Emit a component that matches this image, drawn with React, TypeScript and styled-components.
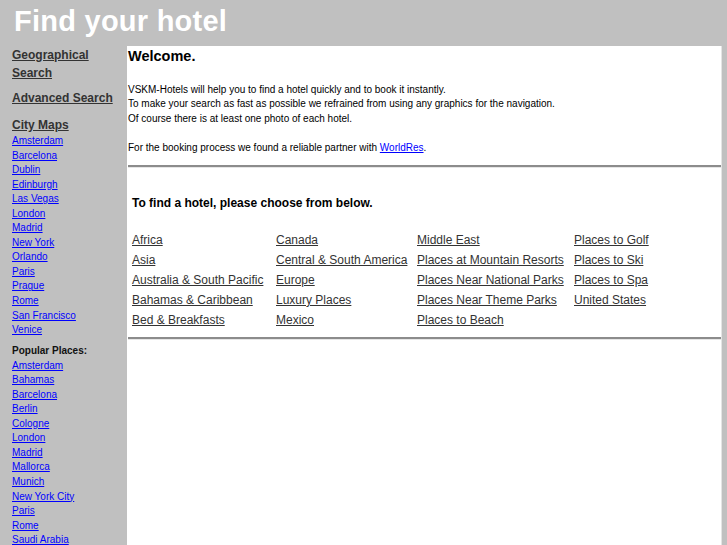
import React from "react";
import styled, { createGlobalStyle } from "styled-components";

const Global = createGlobalStyle`
  html, body { margin: 0; padding: 0; background: #c0c0c0; }
  body { font-family: "Liberation Sans", Arial, sans-serif; }
`;

const Page = styled.div`
  min-height: 545px;
  background: #c0c0c0;
`;

const Header = styled.header`
  height: 46px;
  box-sizing: border-box;
  padding: 7px 0 0 14px;
`;

const Title = styled.h1`
  margin: 0;
  font-size: 29px;
  line-height: 29px;
  font-weight: bold;
  letter-spacing: 0.25px;
  color: #ffffff;
`;

const Body = styled.div`
  display: flex;
  align-items: stretch;
  padding-right: 5px;
`;

const Sidebar = styled.nav`
  width: 127px;
  flex: none;
  box-sizing: border-box;
  padding: 0 12px;
`;

const NavHeading = styled.a<{ $gap?: number }>`
  display: block;
  font-size: 12px;
  line-height: 18px;
  font-weight: bold;
  color: #333333;
  text-decoration: underline;
  margin-bottom: ${(p) => p.$gap ?? 0}px;
`;

const LinkList = styled.ul`
  list-style: none;
  margin: 0;
  padding: 0;
`;

const SideLink = styled.a`
  display: block;
  font-size: 10px;
  line-height: 14.54px;
  color: #0000ff;
  text-decoration: underline;
`;

const SubHeading = styled.div`
  font-size: 10px;
  line-height: 14.5px;
  font-weight: bold;
  color: #111;
  margin-top: 6.5px;
`;

const Main = styled.main`
  flex: 1;
  background: #ffffff;
  border-right: 1px solid #e4e4e4;
  padding: 0 0 0 1px;
  min-height: 499px;
`;

const Welcome = styled.h2`
  margin: 0;
  font-size: 14.5px;
  line-height: 20px;
  font-weight: bold;
  color: #000;
`;

const Intro = styled.div`
  margin-top: 16.75px;
  font-size: 10px;
  line-height: 14.5px;
  color: #000;
`;

const Para = styled.p<{ $last?: boolean }>`
  margin: 0 0 ${(p) => (p.$last ? 9.5 : 14.5)}px 0;
`;

const TextLink = styled.a`
  color: #0000ff;
  text-decoration: underline;
`;

const Rule = styled.hr`
  margin: 0;
  border: none;
  border-top: 2px solid #8c8c8c;
  border-bottom: 1px solid #e6e6e6;
  height: 0;
`;

const Choose = styled.section`
  padding: 28px 0 7px 4px;
`;

const ChooseTitle = styled.div`
  font-size: 12px;
  line-height: 14px;
  font-weight: bold;
  color: #000;
  margin-bottom: 20px;
`;

const RegionGrid = styled.div`
  display: grid;
  grid-template-columns: 144px 141px 157px auto;
  grid-auto-rows: 20px;
`;

const RegionLink = styled.a`
  font-size: 12px;
  line-height: 20px;
  color: #333333;
  text-decoration: underline;
  white-space: nowrap;
`;

const cities = [
  "Amsterdam", "Barcelona", "Dublin", "Edinburgh", "Las Vegas", "London", "Madrid",
  "New York", "Orlando", "Paris", "Prague", "Rome", "San Francisco", "Venice",
];

const popular = [
  "Amsterdam", "Bahamas", "Barcelona", "Berlin", "Cologne", "London", "Madrid",
  "Mallorca", "Munich", "New York City", "Paris", "Rome", "Saudi Arabia",
];

const columns = [
  ["Africa", "Asia", "Australia & South Pacific", "Bahamas & Caribbean", "Bed & Breakfasts"],
  ["Canada", "Central & South America", "Europe", "Luxury Places", "Mexico"],
  ["Middle East", "Places at Mountain Resorts", "Places Near National Parks", "Places Near Theme Parks", "Places to Beach"],
  ["Places to Golf", "Places to Ski", "Places to Spa", "United States"],
];

export default function App() {
  const rows: string[] = [];
  for (let r = 0; r < 5; r++) {
    for (let c = 0; c < 4; c++) rows.push(columns[c][r] ?? "");
  }
  return (
    <Page>
      <Global />
      <Header>
        <Title>Find your hotel</Title>
      </Header>
      <Body>
        <Sidebar>
          <NavHeading href="#" $gap={7}>Geographical Search</NavHeading>
          <NavHeading href="#" $gap={9}>Advanced Search</NavHeading>
          <NavHeading href="#">City Maps</NavHeading>
          <LinkList>
            {cities.map((c) => (
              <li key={c}><SideLink href="#">{c}</SideLink></li>
            ))}
          </LinkList>
          <SubHeading>Popular Places:</SubHeading>
          <LinkList>
            {popular.map((c) => (
              <li key={c}><SideLink href="#">{c}</SideLink></li>
            ))}
          </LinkList>
        </Sidebar>
        <Main>
          <Welcome>Welcome.</Welcome>
          <Intro>
            <Para>
              VSKM-Hotels will help you to find a hotel quickly and to book it instantly.<br />
              To make your search as fast as possible we refrained from using any graphics for the navigation.<br />
              Of course there is at least one photo of each hotel.
            </Para>
            <Para $last>
              For the booking process we found a reliable partner with <TextLink href="#">WorldRes</TextLink>.
            </Para>
          </Intro>
          <Rule />
          <Choose>
            <ChooseTitle>To find a hotel, please choose from below.</ChooseTitle>
            <RegionGrid>
              {rows.map((t, i) => (
                <div key={i}>{t && <RegionLink href="#">{t}</RegionLink>}</div>
              ))}
            </RegionGrid>
          </Choose>
          <Rule />
        </Main>
      </Body>
    </Page>
  );
}
